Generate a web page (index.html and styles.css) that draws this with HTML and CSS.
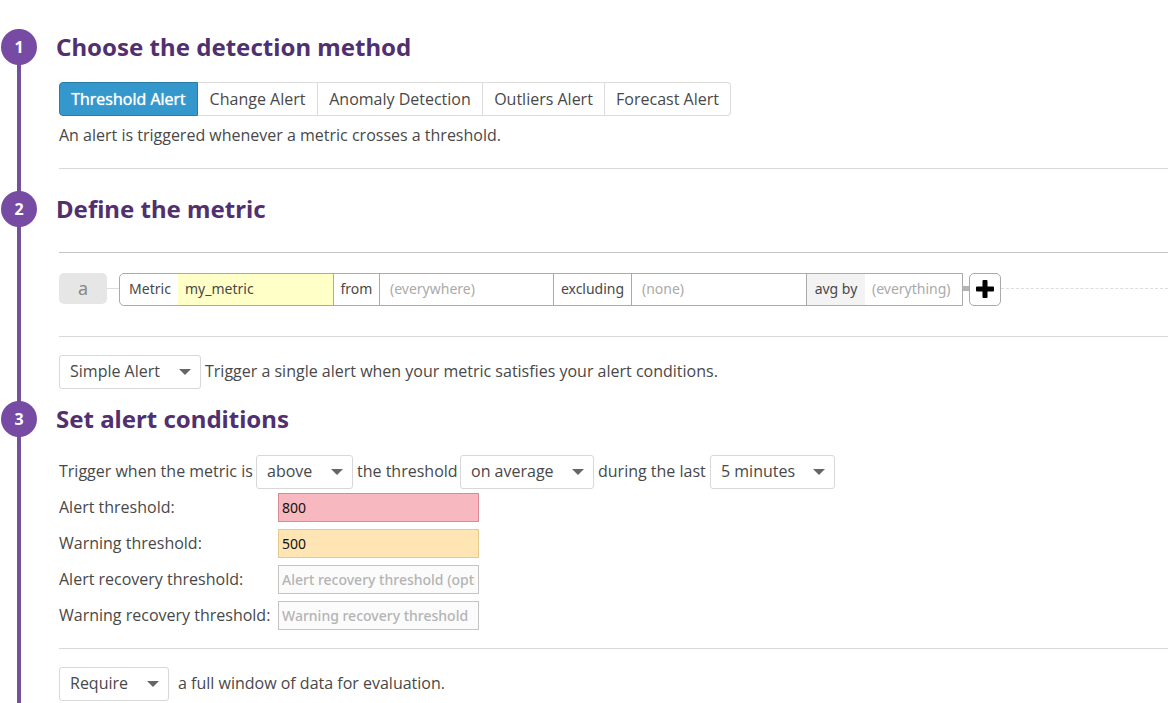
FILE: index.html
```html
<!DOCTYPE html>
<html lang="en">
<head>
<meta charset="utf-8">
<title>New monitor</title>
<link rel="stylesheet" href="styles.css">
</head>
<body>
<main class="steps">
  <section class="step step-method">
    <div class="rail"><span class="badge">1</span></div>
    <div class="content">
      <h2 class="title">Choose the detection method</h2>
      <div class="tabs">
        <button class="tab tab-active" type="button">Threshold Alert</button>
        <button class="tab" type="button">Change Alert</button>
        <button class="tab" type="button">Anomaly Detection</button>
        <button class="tab" type="button">Outliers Alert</button>
        <button class="tab" type="button">Forecast Alert</button>
      </div>
      <p class="note">An alert is triggered whenever a metric crosses a threshold.</p>
      <hr class="rule">
    </div>
  </section>

  <section class="step step-metric">
    <div class="rail"><span class="badge">2</span></div>
    <div class="content">
      <h2 class="title">Define the metric</h2>
      <hr class="rule rule-dark">
      <div class="query">
        <span class="query-name">a</span>
        <span class="link-line"></span>
        <div class="query-box">
          <label class="part part-metric" for="metric">Metric</label>
          <input class="field field-metric" id="metric" type="text" value="my_metric">
          <label class="part part-from" for="from">from</label>
          <input class="field field-from" id="from" type="text" placeholder="(everywhere)">
          <label class="part part-excluding" for="excluding">excluding</label>
          <input class="field field-excluding" id="excluding" type="text" placeholder="(none)">
          <label class="part part-shaded" for="group">avg by</label>
          <input class="field field-group" id="group" type="text" placeholder="(everything)">
        </div>
        <span class="link-bar"></span>
        <button class="add" type="button" aria-label="Add">
          <svg width="18" height="18" viewBox="0 0 18 18" aria-hidden="true"><path d="M7.500 0h3q1 0 1 1v5.500h5.500q1 0 1 1v3q0 1-1 1h-5.500v5.500q0 1-1 1h-3q-1 0-1-1v-5.500h-5.500q-1 0-1-1v-3q0-1 1-1h5.500v-5.500q0-1 1-1z"/></svg>
        </button>
        <span class="dashes"></span>
      </div>
      <hr class="rule">
      <div class="row row-alert">
        <span class="select select-alert"><select id="alert-type" aria-label="Alert type"><option>Simple Alert</option></select></span>
        <label for="alert-type">Trigger a single alert when your metric satisfies your alert conditions.</label>
      </div>
    </div>
  </section>

  <section class="step step-conditions">
    <div class="rail"><span class="badge">3</span></div>
    <div class="content">
      <h2 class="title">Set alert conditions</h2>
      <div class="row row-trigger">
        <label for="direction">Trigger when the metric is</label>
        <span class="select"><select id="direction"><option>above</option></select></span>
        <label for="aggregate">the threshold</label>
        <span class="select"><select id="aggregate"><option>on average</option></select></span>
        <label for="period">during the last</label>
        <span class="select"><select id="period"><option>5 minutes</option></select></span>
      </div>
      <div class="thresholds">
        <label for="t-alert">Alert threshold:</label>
        <input class="threshold threshold-alert" id="t-alert" type="text" value="800">
        <label for="t-warning">Warning threshold:</label>
        <input class="threshold threshold-warning" id="t-warning" type="text" value="500">
        <label for="t-alert-rec">Alert recovery threshold:</label>
        <input class="threshold" id="t-alert-rec" type="text" placeholder="Alert recovery threshold (optional)">
        <label for="t-warning-rec">Warning recovery threshold:</label>
        <input class="threshold" id="t-warning-rec" type="text" placeholder="Warning recovery threshold">
      </div>
      <hr class="rule">
      <div class="row row-window">
        <span class="select select-window"><select id="window"><option>Require</option></select></span>
        <label for="window">a full window of data for evaluation.</label>
      </div>
    </div>
  </section>
</main>
</body>
</html>
```
FILE: styles.css
```css
* { box-sizing: border-box; }

html, body { height: 100%; }

body {
  margin: 0;
  background: #fff;
  color: #484848;
  font: 16px/24px "Open Sans", "Noto Sans", sans-serif;
  overflow-x: hidden;
}

button, input, select { font: inherit; color: inherit; }

.steps {
  display: flex;
  flex-direction: column;
  min-height: 100%;
  padding-top: 29px;
}

.step { display: flex; }
.step-conditions { flex: 1; }

.rail {
  display: flex;
  justify-content: center;
  align-items: flex-start;
  flex: none;
  width: 36px;
  margin-left: 1px;
  background: linear-gradient(#74519b, #74519b) center / 4px 100% no-repeat;
}

.badge {
  width: 36px;
  border-radius: 50%;
  background: #774aa4;
  color: #fff;
  font-size: 16px;
  font-weight: 700;
  line-height: 36px;
  text-align: center;
}

.content {
  flex: 1;
  min-width: 0;
  padding-left: 22px;
}

.title {
  margin: 0 0 0 -3px;
  color: #50306f;
  font-family: "Noto Sans", sans-serif;
  font-size: 24px;
  font-weight: 700;
  line-height: 36px;
}

.rule {
  height: 1px;
  margin: 0;
  border: 0;
  background: #d8d8d8;
}

.rule-dark { background: #c4c4c4; }

.tabs {
  display: grid;
  grid-template-columns: 139px 120px 165px 122px 126px;
  margin-top: 17px;
}

.tab {
  height: 34px;
  padding: 0;
  border: 1px solid #dcdcdc;
  border-left: 0;
  background: #fff;
  white-space: nowrap;
}

.tab:last-child { border-radius: 0 4px 4px 0; }

.tab-active {
  border: 1px solid #2a7ca8;
  border-radius: 4px 0 0 4px;
  background: #3598cc;
  color: #fff;
  text-shadow: 0 0 1px #fff;
}

.note { margin: 7px 0 21px; }
.step-method .rule { margin-bottom: 22px; }
.rule-dark { margin-top: 25px; }

.query {
  display: flex;
  align-items: center;
  margin: 20px 0 30px;
  font-family: "Noto Sans", sans-serif;
  font-size: 14px;
}

.query-name, .link-line, .link-bar, .dashes { margin-bottom: 2px; }

.query-name {
  width: 48px;
  border-radius: 5px;
  background: #e6e6e6;
  color: #888;
  font-size: 18px;
  line-height: 31px;
  text-align: center;
}

.link-line { width: 12px; height: 1px; background: #ddd; }

.query-box {
  display: flex;
  height: 33px;
  border: 1px solid #aaa;
  border-radius: 5px 0 0 5px;
  overflow: hidden;
}

.part { line-height: 30px; text-align: center; white-space: nowrap; }
.part-metric { width: 58px; padding-left: 2px; }
.part-from { width: 47px; border: solid #aaa; border-width: 0 1px; }
.part-excluding { width: 79px; border: solid #aaa; border-width: 0 1px; }
.part-shaded { width: 59px; border-left: 1px solid #aaa; background: #f3f3f3; }

.field {
  min-width: 0;
  padding: 0 7px 2px;
  border: 0;
  background: #fff;
}

.field::placeholder, .threshold::placeholder { color: #aaa; opacity: 1; }
.field-metric { width: 155px; background: #ffffc8; }
.field-from { width: 173px; padding-left: 10px; }
.field-excluding { width: 174px; padding-left: 10px; }
.field-group { width: 97px; }

.link-bar { width: 6px; height: 5px; background: #b4b4b4; }

.add {
  display: grid;
  place-items: center;
  width: 32px;
  height: 33px;
  padding: 0 0 1px;
  border: 1px solid #aaa;
  border-radius: 5px;
  background: #fff;
}

.dashes { flex: 1; border-top: 1px dashed #ddd; }

.row { display: flex; align-items: center; gap: 4px; white-space: nowrap; }
.row label, .thresholds label { padding-bottom: 2px; }
.row-alert { margin: 18px 0 12px; }
.row-window { margin-top: 18px; gap: 9px; }

.row-trigger {
  display: grid;
  grid-template-columns: 193px 97px 99px 134px 108px 125px;
  margin-top: 18px;
}

.select { position: relative; display: flex; }

.select select {
  width: 100%;
  height: 34px;
  padding: 0 10px 2px;
  border: 1px solid #d8d8d8;
  border-radius: 3px;
  background: #fff;
  appearance: none;
}

.select::after {
  content: "";
  position: absolute;
  top: 14px;
  right: 10px;
  border: solid transparent;
  border-width: 6px 6px 0;
  border-top-color: #666;
  pointer-events: none;
}

.select-alert { width: 142px; }
.select-window { width: 110px; }

.thresholds {
  display: grid;
  grid-template-columns: 209px 201px;
  column-gap: 10px;
  row-gap: 7px;
  align-items: center;
  margin: 4px 0 18px;
  white-space: nowrap;
}

.thresholds label { line-height: 22px; }

.threshold {
  width: 100%;
  height: 29px;
  padding: 0 3px;
  border: 1px solid #c4c4c4;
  background: #fbfbfb;
  color: #111;
  font-family: "Noto Sans", sans-serif;
  font-size: 14px;
}

.threshold::placeholder { color: #b4b4b4; font-weight: 500; }

.threshold-alert { border-color: #d98a97; background: #f8b8c0; }
.threshold-warning { border-color: #e8c98c; background: #ffe5b4; }
```
